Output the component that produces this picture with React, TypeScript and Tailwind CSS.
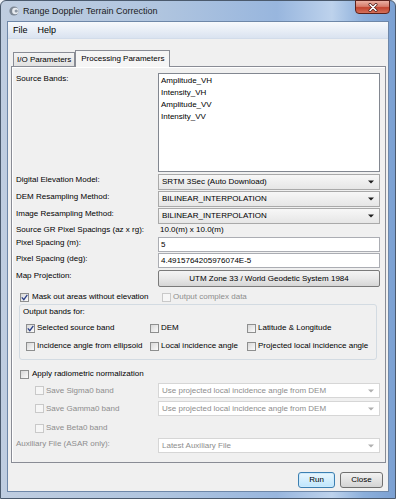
import React from 'react';

const bands = ['Amplitude_VH', 'Intensity_VH', 'Amplitude_VV', 'Intensity_VV'];

function Check({ checked, disabled }: { checked?: boolean; disabled?: boolean }) {
  return (
    <span
      className={`flex h-[9px] w-[9px] shrink-0 items-center justify-center border ${
        disabled ? 'border-[#c9c9c9] bg-[#f6f6f6]' : 'border-[#8e8f8f] bg-gradient-to-br from-[#d8d8d8] to-[#fbfbfb]'
      }`}
    >
      {checked && (
        <svg width="7" height="7" viewBox="0 0 7 7">
          <path d="M0.8 3.4 L2.8 5.6 L6.3 0.8" stroke="#2b3f87" strokeWidth="1.3" fill="none" />
        </svg>
      )}
    </span>
  );
}

function CheckLabel({ label, checked, disabled, gap }: { label: string; checked?: boolean; disabled?: boolean; gap?: boolean }) {
  return (
    <div className={`flex items-center ${gap ? 'gap-[3px]' : 'gap-[2px]'} ${disabled ? 'text-[#8d8d8d]' : 'text-black'}`}>
      <Check checked={checked} disabled={disabled} />
      <span className="whitespace-nowrap">{label}</span>
    </div>
  );
}

function Combo({ value, disabled, h }: { value: string; disabled?: boolean; h?: string }) {
  return (
    <div
      className={`flex w-full items-center justify-between border pl-[3px] pr-[5px] ${h ?? 'h-[16px]'} ${
        disabled
          ? 'border-[#d6d6d6] bg-white text-[#8d8d8d]'
          : 'border-[#a9a9a9] bg-gradient-to-b from-[#f7f7f7] to-[#e6e6e6] text-black'
      }`}
    >
      <span className="whitespace-nowrap">{value}</span>
      <svg width="6" height="4" viewBox="0 0 6 4">
        <path d="M0 0.5h6L3 3.5z" fill={disabled ? '#b0b0b0' : '#1e1e1e'} />
      </svg>
    </div>
  );
}

function Row({ label, children, h, mt, muted }: { label: string; children: React.ReactNode; h: string; mt: string; muted?: boolean }) {
  return (
    <div className={`flex items-start ${h} ${mt}`}>
      <div className={`w-[142px] shrink-0 pt-[1px] leading-[10px] ${muted ? 'text-[#8d8d8d]' : ''}`}>{label}</div>
      <div className="flex h-full flex-1 items-stretch">{children}</div>
    </div>
  );
}

export default function App() {
  return (
    <div className="h-[499px] w-[396px] overflow-hidden bg-[#eef2f8] font-['Liberation_Sans',Arial,sans-serif] text-[8px] leading-[12px] text-black">
      <div className="flex h-[499px] w-[396px] flex-col rounded-t-[6px] border border-[#4b5a6d] bg-[linear-gradient(90deg,#bfcde0_0%,#b0c5df_40%,#98b6de_70%,#bdd2ec_84%,#8cafdb_92%,#7ba0d2_100%)]">
        {/* title bar */}
        <div className="flex h-[20px] shrink-0 items-start justify-between">
          <div className="flex items-center gap-[4px] pl-[8px] pt-[4px]">
            <svg width="10" height="10" viewBox="0 0 10 10">
              <circle cx="5" cy="5" r="4.6" fill="#7d8794" />
              <circle cx="6.3" cy="5" r="3.2" fill="#e7ebf0" />
              <circle cx="7.2" cy="5" r="1.6" fill="#8e98a5" />
            </svg>
            <span className="text-[9px] leading-[12px] text-[#1a1a1a]">Range Doppler Terrain Correction</span>
          </div>
          <div className="-mt-px mr-[5px] flex h-[14px] w-[35px] items-center justify-center rounded-b-[4px] border border-[#5b211b] bg-[linear-gradient(180deg,#eab0a2_0%,#d77d6c_45%,#c2442f_55%,#d4705a_100%)]">
            <svg width="10" height="9" viewBox="0 0 10 9">
              <path d="M2 1.5 L8 7.5 M8 1.5 L2 7.5" stroke="#4b1e1a" strokeWidth="3" strokeLinecap="round" />
              <path d="M2 1.5 L8 7.5 M8 1.5 L2 7.5" stroke="#ffffff" strokeWidth="1.6" strokeLinecap="round" />
            </svg>
          </div>
        </div>

        {/* client area */}
        <div className="mx-[6px] mb-[6px] flex flex-1 flex-col border border-[#6e87a8] bg-[#f0f0f0]">
          <div className="flex h-[17px] shrink-0 items-center gap-[10px] border-b border-[#d2dcea] bg-gradient-to-b from-[#f7f9fc] to-[#dae3f0] pl-[5px] text-[9px]">
            <span>File</span>
            <span>Help</span>
          </div>

          <div className="flex flex-1 flex-col pl-[3px] pr-[2px] pt-[11px]">
            {/* tabs */}
            <div className="flex h-[16px] shrink-0 items-end pl-[2px]">
              <div className="flex h-[14px] items-center border border-b-0 border-[#898c95] bg-gradient-to-b from-[#f4f4f4] to-[#e1e1e1] px-[3px]">
                I/O Parameters
              </div>
              <div className="relative z-10 -mb-px flex h-[17px] items-center border border-b-0 border-[#898c95] bg-[#f5f5f5] px-[5px]">
                Processing Parameters
              </div>
            </div>

            {/* panel */}
            <div className="flex h-[397px] shrink-0 flex-col border border-[#898c95] pl-[4px] pr-[5px] shadow-[inset_1px_1px_0_#ffffff]">
              <Row label="Source Bands:" h="h-[99px]" mt="mt-[6px]">
                <div className="w-full border border-[#828790] bg-white pl-[2px] pt-[1px]">
                  {bands.map((b) => (
                    <div key={b} className="leading-[12px]">
                      {b}
                    </div>
                  ))}
                </div>
              </Row>

              <Row label="Digital Elevation Model:" h="h-[16px]" mt="mt-[2px]">
                <Combo value="SRTM 3Sec (Auto Download)" />
              </Row>
              <Row label="DEM Resampling Method:" h="h-[16px]" mt="mt-[1px]">
                <Combo value="BILINEAR_INTERPOLATION" />
              </Row>
              <Row label="Image Resampling Method:" h="h-[16px]" mt="mt-[1px]">
                <Combo value="BILINEAR_INTERPOLATION" />
              </Row>

              <div className="flex h-[12px] items-center">
                <div className="w-[142px] shrink-0">Source GR Pixel Spacings (az x rg):</div>
                <div className="pl-[2px]">10.0(m) x 10.0(m)</div>
              </div>

              <Row label="Pixel Spacing (m):" h="h-[15px]" mt="mt-[1px]">
                <div className="flex w-full items-center border border-[#abadb3] bg-white px-[2px]">5</div>
              </Row>
              <Row label="Pixel Spacing (deg):" h="h-[15px]" mt="mt-[1px]">
                <div className="flex w-full items-center border border-[#abadb3] bg-white px-[2px]">4.4915764205976074E-5</div>
              </Row>
              <Row label="Map Projection:" h="h-[17px]" mt="mt-[2px]">
                <div className="flex w-full items-center justify-center rounded-[2px] border border-[#7a7a7a] bg-gradient-to-b from-[#f4f4f4] via-[#e8e8e8] to-[#d6d6d6]">
                  UTM Zone 33 / World Geodetic System 1984
                </div>
              </Row>

              <div className="mt-[4px] flex h-[12px] items-center">
                <div className="w-[142px] shrink-0 pl-[4px]">
                  <CheckLabel label="Mask out areas without elevation" checked gap />
                </div>
                <div className="pl-[4px]">
                  <CheckLabel label="Output complex data" disabled />
                </div>
              </div>

              {/* output bands group */}
              <div className="ml-[3px] mr-[3px] mt-[1px] flex h-[56px] flex-col rounded-[3px] border border-[#d3dbe2] pb-[5px]">
                <div className="flex h-[12px] items-center pl-[3px] pt-[1px]">Output bands for:</div>
                <div className="mt-[5px] grid h-[12px] grid-cols-[124px_97px_1fr] items-center pl-[6px]">
                  <CheckLabel label="Selected source band" checked />
                  <CheckLabel label="DEM" />
                  <CheckLabel label="Latitude & Longitude" />
                </div>
                <div className="mt-[6px] grid h-[12px] grid-cols-[124px_97px_1fr] items-center pl-[6px]">
                  <CheckLabel label="Incidence angle from ellipsoid" />
                  <CheckLabel label="Local incidence angle" />
                  <CheckLabel label="Projected local incidence angle" />
                </div>
              </div>

              <div className="mt-[8px] flex h-[12px] items-center pl-[4px]">
                <CheckLabel label="Apply radiometric normalization" gap />
              </div>

              <div className="mt-[3px] flex h-[15px] items-center">
                <div className="w-[142px] shrink-0 pl-[19px]">
                  <CheckLabel label="Save Sigma0 band" disabled />
                </div>
                <div className="flex h-full flex-1">
                  <Combo value="Use projected local incidence angle from DEM" disabled h="h-[15px]" />
                </div>
              </div>
              <div className="mt-[3px] flex h-[15px] items-center">
                <div className="w-[142px] shrink-0 pl-[19px]">
                  <CheckLabel label="Save Gamma0 band" disabled />
                </div>
                <div className="flex h-full flex-1">
                  <Combo value="Use projected local incidence angle from DEM" disabled h="h-[15px]" />
                </div>
              </div>
              <div className="mt-[6px] flex h-[12px] items-center pl-[19px]">
                <CheckLabel label="Save Beta0 band" disabled />
              </div>

              <Row label="Auxiliary File (ASAR only):" h="h-[15px]" mt="mt-[4px]" muted>
                <Combo value="Latest Auxiliary File" disabled h="h-[15px]" />
              </Row>
            </div>

            {/* buttons */}
            <div className="mt-[9px] flex justify-end gap-[5px] pr-[3px]">
              <div className="flex h-[16px] w-[37px] items-center justify-center rounded-[3px] border border-[#3c7fb1] bg-gradient-to-b from-[#eaf6fd] to-[#bee6fd] shadow-[inset_0_0_0_1px_#cdeafc]">
                Run
              </div>
              <div className="flex h-[16px] w-[43px] items-center justify-center rounded-[3px] border border-[#707070] bg-gradient-to-b from-[#f2f2f2] to-[#d4d4d4]">
                Close
              </div>
            </div>
          </div>
        </div>
      </div>
    </div>
  );
}
